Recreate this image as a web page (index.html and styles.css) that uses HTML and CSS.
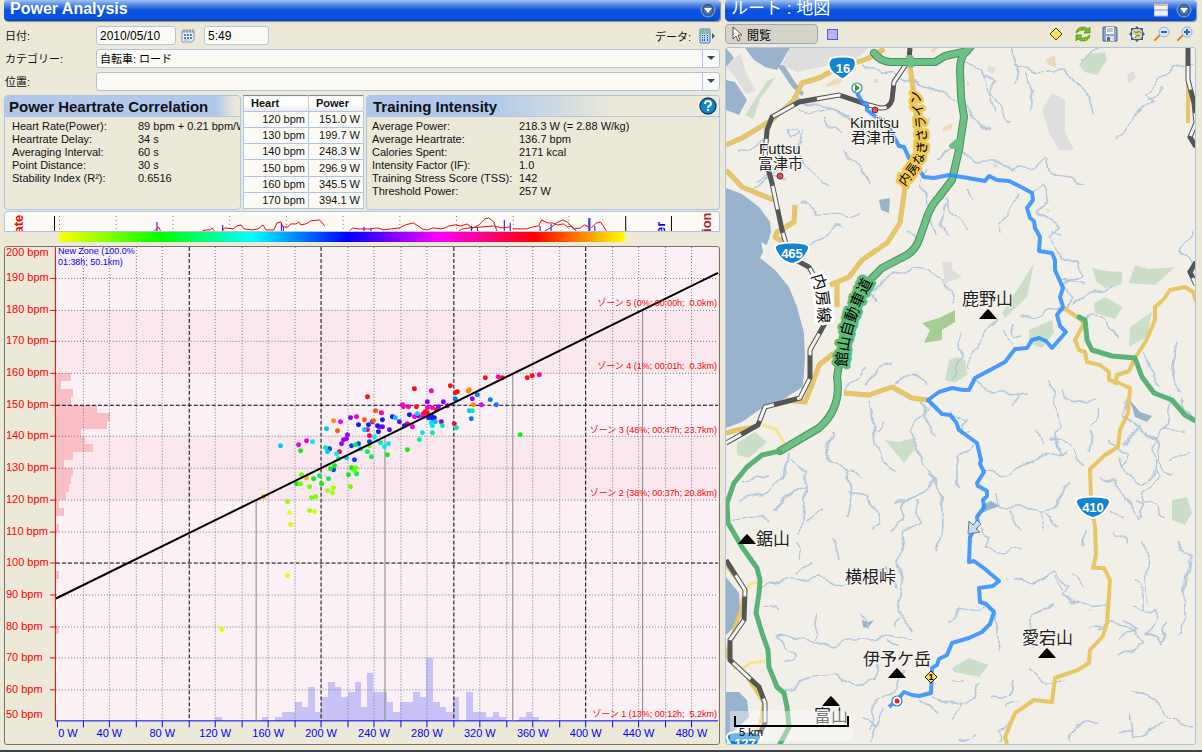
FILE: index.html
```
<!DOCTYPE html>
<html lang="ja">
<head>
    <meta charset="UTF-8">
    <meta name="viewport" content="width=device-width, initial-scale=1.0">
    <title>Power Analysis</title>
    <link rel="stylesheet" href="styles.css">
</head>
<body>
    <main class="workspace">
        <section class="pane">
            <header class="titlebar">
                <h1>Power Analysis</h1>
                <button class="icon-btn" aria-label="Menu">
                    <svg width="16" height="16" viewBox="0 0 16 16"><circle cx="8" cy="8" r="7" fill="#3d6ca5" stroke="#8aa6cc"/><circle cx="8" cy="8" r="5" fill="#4d7ab0" stroke="#2c4f80"/><path d="M4 6h8l-4 5z" fill="#fff"/></svg>
                </button>
            </header>

            <form class="activity-form">
                <div class="form-row">
                    <label for="date">日付:</label>
                    <input type="text" id="date" class="date" value="2010/05/10">
                    <button type="button" class="icon-btn" aria-label="Calendar">
                        <svg width="16" height="16" viewBox="0 0 16 16"><path d="M2 3h12v9l-2 2H2z" fill="#e6ecf6" stroke="#8e98a8"/><path d="M4 1v4M7 1v4M10 1v4M13 1v4" stroke="#77808e"/><path d="M4 6h2v2H4zM7 6h2v2H7zM10 6h2v2h-2zM4 9h2v2H4zM7 9h2v2H7zM10 9h2v2h-2z" fill="#5a83cc"/><path d="M4 12h5" stroke="#9bb4de"/></svg>
                    </button>
                    <input type="text" class="time" value="5:49" aria-label="時刻">
                    <span class="data-label">データ:</span>
                    <button type="button" class="icon-btn" aria-label="データ">
                        <svg width="17" height="16" viewBox="0 0 17 16"><rect x="1" y="1" width="10" height="14" rx="1" fill="#b9d6f5" stroke="#4d7db5"/><path d="M3 3h6v2H3z" fill="#e9ffe0" stroke="#3f9a4a"/><path d="M3 7h1v1H3zM5 7h1v1H5zM8 7h1v1H8zM3 9h1v1H3zM5 9h1v1H5zM8 9h1v1H8zM3 11h1v2H3zM5 11h1v2H5zM8 11h1v2H8z" fill="#245a9c"/><path d="M13 5v6l3-3z" fill="#3d5a80"/></svg>
                    </button>
                </div>
                <div class="form-row">
                    <label for="category">カテゴリー:</label>
                    <div class="select">
                        <select id="category"><option>自転車: ロード</option></select>
                    </div>
                </div>
                <div class="form-row">
                    <label for="location">位置:</label>
                    <div class="select">
                        <select id="location"><option></option></select>
                    </div>
                </div>
            </form>

            <div class="summary">
                <section class="box correlation">
                    <h2>Power Heartrate Correlation</h2>
                    <dl>
                        <dt>Heart Rate(Power):</dt><dd>89 bpm + 0.21 bpm/W</dd>
                        <dt>Heartrate Delay:</dt><dd>34 s</dd>
                        <dt>Averaging Interval:</dt><dd>60 s</dd>
                        <dt>Point Distance:</dt><dd>30 s</dd>
                        <dt>Stability Index (R²):</dt><dd>0.6516</dd>
                    </dl>
                </section>
                <table class="zones">
                    <thead>
                        <tr><th>Heart</th><th>Power</th></tr>
                    </thead>
                    <tbody>
                        <tr><td>120 bpm</td><td>151.0 W</td></tr>
                        <tr><td>130 bpm</td><td>199.7 W</td></tr>
                        <tr><td>140 bpm</td><td>248.3 W</td></tr>
                        <tr><td>150 bpm</td><td>296.9 W</td></tr>
                        <tr><td>160 bpm</td><td>345.5 W</td></tr>
                        <tr><td>170 bpm</td><td>394.1 W</td></tr>
                    </tbody>
                </table>
                <section class="box intensity">
                    <h2>Training Intensity
                        <button class="icon-btn" aria-label="Help">
                            <svg width="19" height="19" viewBox="0 0 19 19"><circle cx="9" cy="9" r="8" fill="#0f86d2" stroke="#123a5c" stroke-width="1.3"/><path d="M6 7q0-3 3-3t3 3q0 1-2 2-1 1-1 2" fill="none" stroke="#fff" stroke-width="2"/><path d="M8 12h2v2H8z" fill="#fff"/></svg>
                        </button>
                    </h2>
                    <dl>
                        <dt>Average Power:</dt><dd>218.3 W (= 2.88 W/kg)</dd>
                        <dt>Average Heartrate:</dt><dd>136.7 bpm</dd>
                        <dt>Calories Spent:</dt><dd>2171 kcal</dd>
                        <dt>Intensity Factor (IF):</dt><dd>1.0</dd>
                        <dt>Training Stress Score (TSS):</dt><dd>142</dd>
                        <dt>Threshold Power:</dt><dd>257 W</dd>
                    </dl>
                </section>
            </div>

            <svg class="strip" viewBox="4 212 717 19">
                <g class="strip-text">
                    <text transform="translate(22 243) rotate(-90)" fill="#f00">Rate</text>
                    <text transform="translate(667 234) rotate(-90)" fill="#00f">er</text>
                    <text transform="translate(713 232) rotate(-90)" fill="#a52a2a">ion</text>
                </g>
                <path d="M58.5 216v15M115.5 216v15M172.5 216v15M229.5 216v15M286.5 216v15M343.5 216v15M400.5 216v15M457.5 216v15M514.5 216v15M570.5 216v15" stroke="#777" stroke-dasharray="1 3"/>
                <path d="M53.5 216v15M627.5 216v15M673.5 216v15" stroke="#000"/>
                <path d="M156.5 222v9M222.5 225v6M281.5 223v8M283.5 227v4M364.5 227v4M371.5 228v3M472.5 226v5M478.5 227v4M505.5 220v11M511.5 223v8M541.5 226v5M552.5 224v7M590.5 218v13M591.5 218v13M596.5 226v5" stroke="#00f"/>
                <path d="M154 231l4-4 2 4M202 231l4-1 4 0 2-2 2 3M222 231l2-3 9 1 4-3 4-1 3 4 8 1 6-1 5-4 3 5h8l3-7 4-1 2 5h5l3-3h5l3-2 2 3 5-1 5-3 9-1 5 6M350 231l3-3 6 1h11l8-1 6 2 8-1 8-1 6-3 8-2 5 3 4 3 5 1 6-2 8 1 4-1 4-2 6-1 6 1 6-2 4 3M460 231l3-2 8-1 12-1 12-1 8 2 8-1M514 229h14l6-2 6-1 3-6 6 3 5 0 5 2 6-1 4 3 4-1 3 3 6-1 4-3 5 2M593 228l5-5 4-1 3 4 3 5" fill="none" stroke="#f00"/>
                <path d="M472 229l8-4 6-6 4-1 5 4 3 9M546 231l6-3 6-5 6-3 5 2 5 6 4 3" fill="none" stroke="#a52a2a"/>
            </svg>
            <div class="rainbow"></div>

            <svg class="chart" id="chart" viewBox="5 247 715 498"></svg>
        </section>

        <section class="pane">
            <header class="titlebar">
                <h1 class="map-title">ルート : 地図</h1>
                <button class="icon-btn" aria-label="Split">
                    <svg width="14" height="14" viewBox="0 0 14 14"><path d="M0 1h14v12H0z" fill="#f3f3ff" stroke="#b5a9de"/><path d="M1 2h12" stroke="#d8c27c" stroke-width="2"/><path d="M0 7h14" stroke="#7a8de0"/></svg>
                </button>
                <button class="icon-btn" aria-label="Menu">
                    <svg width="16" height="16" viewBox="0 0 16 16"><circle cx="8" cy="8" r="7" fill="#3d6ca5" stroke="#8aa6cc"/><circle cx="8" cy="8" r="5" fill="#4d7ab0" stroke="#2c4f80"/><path d="M4 6h8l-4 5z" fill="#fff"/></svg>
                </button>
            </header>
            <div class="toolbar">
                <button class="mode-btn">
                    <svg width="12" height="16" viewBox="0 0 12 16"><path d="M2 1v12l3-3 2 5 2-1-2-5h4z" fill="#fff" stroke="#555"/></svg>
                    閲覧
                </button>
                <button class="icon-btn select-area" aria-label="範囲選択"></button>
                <div class="tools">
                    <button class="icon-btn" aria-label="Waypoint">
                        <svg width="16" height="16" viewBox="0 0 16 16"><path d="M8 2l6 6-6 6-6-6z" fill="#ffe066" stroke="#55430d"/></svg>
                    </button>
                    <button class="icon-btn" aria-label="Refresh">
                        <svg width="16" height="16" viewBox="0 0 16 16"><path d="M1 7Q2 1 8 1q3 0 5 2l2-2v6H9l2-2Q7 2 1 7z" fill="#7fbf24" stroke="#45861a" stroke-width=".7"/><path d="M15 9q-1 6-7 6-3 0-5-2l-2 2V9h6l-2 2q4 3 10-2z" fill="#7fbf24" stroke="#45861a" stroke-width=".7"/></svg>
                    </button>
                    <button class="icon-btn" aria-label="Save">
                        <svg width="16" height="16" viewBox="0 0 16 16"><path d="M1 1h13l1 1v13H1z" fill="#8da6c8" stroke="#4a658f"/><path d="M4 1h8v7H4z" fill="#f5f8ff"/><path d="M5 3h6M5 5h6" stroke="#8494ad"/><path d="M4 10h8v5H4z" fill="#dbe2ee"/><path d="M5 11h3v4H5z" fill="#54698c"/></svg>
                    </button>
                    <button class="icon-btn" aria-label="Fit route">
                        <svg width="16" height="16" viewBox="0 0 16 16"><path d="M8 0l3 3H5zM8 16l3-3H5zM0 8l3-3v6zM16 8l-3-3v6zM2 2h4L2 6zM14 2v4l-4-4zM2 14v-4l4 4zM14 14h-4l4-4z" fill="#4b55a5"/><circle cx="8" cy="8" r="5" fill="#b5e08a"/><path d="M5 5q2 3 4 1t3 1M6 12l2-3 3 1" stroke="#e1502e" fill="none"/><path d="M4 9l2 1" stroke="#fff" stroke-width="2"/></svg>
                    </button>
                    <button class="icon-btn zoom" aria-label="Zoom out">
                        <svg width="16" height="16" viewBox="0 0 16 16"><path d="M1 14l5-5" stroke="#df8433" stroke-width="2" stroke-linecap="round"/><circle cx="10" cy="6" r="5" fill="#d5e9ff" stroke="#8db0dc"/><path d="M7 6h6" stroke="#2d65b5" stroke-width="2"/></svg>
                    </button>
                    <button class="icon-btn zoom" aria-label="Zoom in">
                        <svg width="16" height="16" viewBox="0 0 16 16"><path d="M1 14l5-5" stroke="#df8433" stroke-width="2" stroke-linecap="round"/><circle cx="10" cy="6" r="5" fill="#d5e9ff" stroke="#8db0dc"/><path d="M7 6h6M10 3v6" stroke="#2d65b5" stroke-width="2"/></svg>
                    </button>
                </div>
            </div>

            <svg class="map" viewBox="726 48 469 696">
                <defs>
                    <filter id="wiggle" x="0" y="0" width="1" height="1">
                        <feTurbulence type="fractalNoise" baseFrequency="0.07" numOctaves="1" seed="4"/>
                        <feDisplacementMap in="SourceGraphic" scale="14" xChannelSelector="R" yChannelSelector="G"/>
                    </filter>
                    <path id="shield" d="M-14-9Q0-12 14-9 19-7 16-2 11 8 3 10 0 12-3 10-11 8-16-2-19-7-14-9Z"/>
                    <path id="peak" d="M-9 5l6-7 3-3 3 3 6 7z"/>
                    <path id="nagisa-line" d="M905 187L919 168Q927 155 927 140L925 120 919 92"/>
                    <path id="tateyama-line" d="M847 367Q848 325 875 278"/>
                    <path id="uchibo-line" d="M811 276Q820 298 818 332"/>
                </defs>

                <!-- sea and lakes -->
                <g class="sea">
                    <path d="M745 48h45l-13 22-12-3-11-7zM726 80l9 2 12 18-8 15-13-5zM726 48l8 10-8 9z"/>
                    <path d="M777 65l15 22 10 9 2-3-9-11-11-17z"/>
                    <path d="M726 188L742 194 759 207 770 222 771 232 767 245 761 242 763 252 760 258 775 270 789 287 797 307 804 333 805 357 803 387 782 400 759 410 742 422 726 428z"/>
                    <path d="M726 577L739 593 740 610 734 627 726 635zM726 692L739 692 747 700 749 717 735 730 726 744z"/>
                    <path d="M879 200l11-2-1 15-8-3zM982 505l9-4 9 5-9 3-9 4zM1130 400l10 12 12 4-5 6-12-5zM862 620l6 2 6-2-6 8-5-1z"/>
                </g>

                <!-- built-up areas and forest -->
                <path class="urban" d="M790 48h79l-14 12-25 5-33 7-15-7zM1042 110l10-17 13 7v33l9 17h-15l-10-17zM942 262h10v8l10 7-17 6zM988 65l8 3-3 6-6-3zM1127 75l6-4 3 6-7 7zM726 67l14-14 6 20 10 18-10 3-10-16z"/>
                <path class="forest" d="M1079 65l8-11 18-2 2 8-10 15-12-3zM1092 268l15 3 15 1v12l-17 4-9-7zM1135 265l13 4 27-2-20 18-26-2zM1094 303l11-6 18 10-8 12-20-6zM1130 327l22-15-5 25-18 10zM1034 263l-7 34-22 21-3-5 17-26zM1029 330l23-10 2 13-12 15-13-5zM949 360l8-3 8 3 2 15-12 8-10-3zM737 443l18-11 12 10-18 16-12-3zM885 440l14 2 15-4v12l-10 13-9-11zM1172 500l15-3 5 16-7 12-13-5zM952 668l17-10 20 7-10 12-25-5zM745 115l22-34 9-4-16 22-7 20zM925 120l5-3-1 8z"/>
                <path class="park" d="M922 323l17-5 16-8v12l-13 8v10l-18 3 6-13z"/>
                <path class="field" d="M825 85l10-6 10-1-5 5-12 4zM930 50l8-3-4 6zM1045 60l10-5 1 13-7-3zM943 127l10-4-2 7-8 1zM992 163l6 2-2 4zM874 79l4 0v4h-4zM966 83l3-1v4zM1046 208l4 2-2 3zM1005 578l4 2-2 1zM1088 609l5 1-4 1z"/>

                <!-- rivers -->
                <g class="rivers" filter="url(#wiggle)">
                    <path d="M798 108l14 4 14-4 20 7 22 18 14 4M805 130l-8 20 12 20 20 16M840 150l18 16 12 18M824 115l6 15 14 2M795 98l30 8 22 12M737 150l25-7 22 16-8 14-20 8M750 192l20-14 16 4M786 132l10-4 4 6-8 6z"/>
                    <path d="M866 65l24 10 38 12 34 18 26 26M960 60l22 8 6 22 24 32M985 78l10 5-6 10 4 20M1010 50l8 14-4 20M1014 62l22 10 30-2 24 26 4 20M1024 72l8 18-2 20M1080 63l22-15M1190 62l-22 10-24 20 12 10-20 12-18 24M1150 100l14-14"/>
                    <path d="M936 160l16-10 24 10 22 0 14 10 22-2 14-10 4 14 20 10 14 2M926 170l-4 14 8 30 8 20M944 198l12 20 10 14M1020 195l-22 28 2 12M946 205l-4 20 4 10M966 190l8 10M860 215l-44-1-16-12M795 250l28-12 20-12M920 240l-14-10"/>
                    <path d="M1034 192l10-8 4 14-10 12 8 10 14 8-12 10 6 14 22 10 4 14-16 10 10 12-14 10M1064 234l-14-2M1064 280l20 4M1080 316l20 2 20 20M1020 316l22-1 20-10M1070 305l20-12 28-8M1190 230l-8 20 12 14M1144 350l14 36M1176 340l-4 30 8 20"/>
                    <path d="M872 290l40-24 18 4 20 20 4 14M868 288l6 14M958 330l2 28-6 22M985 330l-14 20-2 20M996 320l-10 10M1010 325l6 10 10-2M1012 345l-8-14M865 385l14-18 12-4M845 390l22-22M895 385l18-10 14 10"/>
                    <path d="M830 432l-4 24 22 14 4 26-4 22M850 470l14 8M848 490l20 8 12 26-8 6M788 454l-4 24-22 18-22 4M790 458l14 14 0 30-4 34M804 485l-18 12-12 14M805 520l20-10M740 480l28-6M732 520l20-4 14 4M800 560l-4-20M838 562l-4-24"/>
                    <path d="M869 400l4 24 2 20 6 16 14 10M876 430l10-10M930 405l-10 14-12 10 10 20 10 20 6 14-16 10-14 10-2 18-14 10M928 475l14 20 2 30-10 24M904 530l14-6-2-24M904 530l-6 30 4 20-4 30 14 20M894 500l16 0"/>
                    <path d="M920 395l8 30 10 10M950 415l18 4-6 14 8 0M975 445l-18 12 0 30M984 470l18 6 20-10 20-10 24-2M993 494l6 14 22 0 20 4 14-8 14-22M1010 510l8 20M1040 512l4 20M1045 512l14 16M980 530l12 6-8 14 20 2 18-4M972 380l20 14 18 0 20-2M1020 393l-8 14M1050 380l4 26 10 20-10 8 6 20M1035 430l10 14M1060 390l14 14 20-4"/>
                    <path d="M1050 436l18 8 16 22M1090 425l10-14M1093 430l-4 24M1130 395l-8 20 22 16 18 14-4 18 14 12M1120 455l6 20 16 10 14-14M1112 480l16 20 10 20M1098 475l14 6M1170 395l-4 30-12 20 4 30-14 20-4 22M1182 398l10 26M1163 430l20 0M1170 460l20-8M1085 530l-2 16M1140 540l10 14-4 26 4 22M1175 540l14 16-4 30 0 34-10 14M1115 530l14 14M1105 440l24 14-8 12M1140 425l-14 20M1134 500l20 6 10 12M1108 510l18 8"/>
                    <path d="M760 590l14-10 22 0 24-4 22 10 22-4 22-16 10 22M810 560l-14 14M818 612l-4 28M777 638l18 16-10 8M777 638l18-2 28 10 22-6 22 0 24-6 22 4M867 628l-6-16M894 626l10-6M888 640l10 6M764 608l16 4M785 690l22-10 28-4 20 10 20-6M875 680l0-18"/>
                    <path d="M1015 580l18 4 22-12 14 14-6 10 20 10 24-2M1070 575l14 14M1030 635l4-20 18-14M1063 590l-6-14M1098 630l14-6 22 4 10 14-24 14M1144 610l0-20-8-10M1134 608l24 4-10 22 14 8M1160 640l10-18M1122 620l14 6-14 14M1090 630l12-4"/>
                    <path d="M948 620l14-10 20-4M996 612l4 38M1030 668l14 14 20-4M1014 680l-4 14-16 6M1004 704l14-2M930 696l18 8 24-4 6-18M960 700l-6 16M950 680l14 0M870 730l4-30 20-10 10-20M862 720l14 6 6-18M878 722l-8 20M920 700l18 14M1010 720l-14 14 4 8M960 742l16-8M1070 742l6-18 22-2M1132 690l24 10 10 20 26 6M1130 712l4 24 28-12M1132 730l-14 6"/>
                </g>

                <!-- trunk roads -->
                <g class="road">
                    <path class="casing" d="M884 49L869 58 855 63 830 72 819 78 802 83 794 100 772 120 742 138 726 145M910 67L914 95 918 130 924 145 916 163 905 187 900 223 887 243 862 260 849 277 830 285M837 283v24M834 353L819 365 812 385 805 402 785 400M755 427L737 430 726 433M726 170L742 187 774 200M795 205l-1 17-17 10-2 5 10 6M844 393L869 395 892 387 912 398 928 400"/>
                    <path d="M884 49L869 58 855 63 830 72 819 78 802 83 794 100 772 120 742 138 726 145M910 67L914 95 918 130 924 145 916 163 905 187 900 223 887 243 862 260 849 277 830 285M837 283v24M834 353L819 365 812 385 805 402 785 400M755 427L737 430 726 433M726 170L742 187 774 200M795 205l-1 17-17 10-2 5 10 6M844 393L869 395 892 387 912 398 928 400"/>
                    <path d="M1064 308L1077 317 1084 323 1075 340 1079 350 1085 352 1087 362 1100 365 1109 372 1109 380 1119 383 1130 388 1128 413 1120 430 1118 447 1105 455 1090 469 1091 500 1095 527 1096 555 1093 568 1104 568 1110 580 1107 623 1103 636 1090 650 1089 663 1078 670 1055 678 1052 702 1034 700 1015 713 1005 737 1007 744M1115 385l2-10 12-4 6-13 11-17 9-21v-13l9-8 6-9 15-3 8 5 3 10M1188 83v40M727 566l18 24-4 20-15 45 20 20 18 28-4 24"/>
                </g>
                <path class="minor" d="M762 425l14 4 8 14M757 582l-7 2-8 14M765 661l-14 2-9 6-9-1M751 735l14-14"/>

                <!-- railways -->
                <path class="rail-edge" d="M910 48L909 60 894 82 892 100Q889 109 880 108L869 105 839 95 799 102 772 117 767 130 765 157 772 183 782 230 790 257 809 267 822 290M828 318L810 350V378L800 398 765 407 758 425 726 443M726 560L745 590 744 620 730 640 730 660 759 687 765 703 765 723 759 735M1188 48V80L1194 103 1196 123 1190 137 1196 147M1196 262l-6 10 6 13"/>
                <path class="rail" d="M910 48L909 60 894 82 892 100Q889 109 880 108L869 105 839 95 799 102 772 117 767 130 765 157 772 183 782 230 790 257 809 267 822 290M828 318L810 350V378L800 398 765 407 758 425 726 443M726 560L745 590 744 620 730 640 730 660 759 687 765 703 765 723 759 735M1188 48V80L1194 103 1196 123 1190 137 1196 147M1196 262l-6 10 6 13"/>

                <!-- expressways -->
                <g class="expressway">
                    <path class="edge" d="M874 53Q880 61 890 62H935L945 56 967 51M973 44L965 53Q960 58 960 70L961 97 964 117 959 150 952 180 939 197Q932 204 927 217L919 240Q915 250 907 255L882 268 865 285 849 317 842 347 837 377Q842 408 819 428L780 451"/>
                    <path d="M874 53Q880 61 890 62H935L945 56 967 51M973 44L965 53Q960 58 960 70L961 97 964 117 959 150 952 180 939 197Q932 204 927 217L919 240Q915 250 907 255L882 268 865 285 849 317 842 347 837 377Q842 408 819 428L780 451"/>
                    <path class="thin" d="M780 451L762 455 747 467 734 483 727 503 728 523 742 547 757 568 760 580 759 593 756 613 762 633 768 650 769 667 777 687 784 693 787 707 789 727 780 744M1079 317L1085 320 1087 340 1092 350 1112 356 1135 358 1142 377 1154 393 1172 400 1185 415 1196 421"/>
                    <path d="M909 58l2 0v7zM957 142l-5 4 7 0z"/>
                </g>

                <!-- recorded track -->
                <path class="route" d="M857 93L862 102 867 104V110L876 117 885 121 894 137 899 146 904 147 909 158 917 158 918 168 924 177 934 178 949 175 962 177 985 181 989 176 997 180 1009 181 1023 188 1032 193 1033 200 1027 208 1030 218 1034 221 1035 228 1040 237 1039 251 1052 253 1055 260 1055 270 1063 288 1060 297 1063 307 1057 315 1060 326 1066 332 1052 348 1046 341 1039 338 1032 340 1027 348 1015 349 1005 362 975 378 969 390 963 390 952 388 939 392 928 400 942 414 950 415 956 422 959 430 977 443 981 460 980 464 984 472 977 483 978 486 987 491 987 496 983 500 984 507 977 517 978 524 970 537 969 562 974 561 985 569 999 581 993 586 979 588 980 602 986 604 994 612 990 624 982 632 969 638 952 643 947 655 939 659 937 665 932 668 931 693 919 696 912 695 904 692 897 700 889 707"/>

                <!-- labels along lines -->
                <g class="path-label">
                    <text class="on-trunk"><textPath href="#nagisa-line">内房なぎさライン</textPath></text>
                    <text class="on-expressway"><textPath href="#tateyama-line">館山自動車道</textPath></text>
                    <text class="on-rail"><textPath href="#uchibo-line">内房線</textPath></text>
                </g>

                <g class="places">
                    <circle cx="875" cy="110" r="3"/>
                    <circle cx="780" cy="176" r="3"/>
                    <text x="850" y="128">Kimitsu</text>
                    <text x="851" y="143">君津市</text>
                    <text x="759" y="154">Futtsu</text>
                    <text x="758" y="169">富津市</text>
                </g>
                <g class="peaks">
                    <use href="#peak" x="988" y="314"/><text x="962" y="305">鹿野山</text>
                    <use href="#peak" x="747" y="539"/><text x="756" y="545">鋸山</text>
                    <text x="845" y="583">横根峠</text>
                    <use href="#peak" x="897" y="673"/><text x="863" y="665">伊予ケ岳</text>
                    <use href="#peak" x="1047" y="653"/><text x="1022" y="644">愛宕山</text>
                    <use href="#peak" x="831" y="701"/><text x="814" y="722">富山</text>
                </g>

                <g class="shields">
                    <path d="M831 58Q843 55 854 58 859 65 851 73L845 78Q843 80 840 78L833 73Q825 65 831 58Z"/>
                    <text x="843" y="73">16</text>
                    <use href="#shield" x="792" y="253"/><text x="792" y="258">465</text>
                    <use href="#shield" x="1093" y="507"/><text x="1093" y="512">410</text>
                    <use href="#shield" x="744" y="742"/><text x="745" y="748">127</text>
                </g>

                <!-- markers -->
                <circle cx="857" cy="88" r="5" fill="#fff" stroke="#2a86c8" stroke-width="1.2"/>
                <path d="M855 84v8l5-4z" fill="#4a9a12"/>
                <circle cx="897" cy="701" r="5" fill="#fff" stroke="#2a86c8" stroke-width="1.2"/>
                <circle cx="897" cy="701" r="2.5" fill="#e22"/>
                <path d="M931 671l6 6-6 6-6-6z" fill="#ffd94a" stroke="#222"/>
                <text class="wp" x="931" y="680">1</text>
                <path d="M969 521L968 534 980 532 976 529 981 524 977 520 973 525z" fill="#b9dcff" stroke="#777"/>

                <rect x="730" y="711" width="123" height="30" fill="#fff" opacity=".4"/>
                <path d="M735 716v10h113v-10" fill="none" stroke="#000" stroke-width="2"/>
                <text class="scale" x="739" y="736">5 km</text>
            </svg>
        </section>
    </main>
    <script src="chart.js"></script>
</body>
</html>
```
FILE: styles.css
```
:root {
    --bg: #ece9d8;
    --field: #fcfaf5;
    --line: #aec4e2;
    --ui-font: "Liberation Sans", "Noto Sans CJK JP", sans-serif;
}

* {
    margin: 0;
    padding: 0;
    box-sizing: border-box;
}

body {
    background: var(--bg);
    color: #111;
    font-family: var(--ui-font);
    font-size: 11px;
}

.workspace {
    display: grid;
    grid-template-columns: 716fr 471fr;
    gap: 5px;
    min-height: 100vh;
    padding: 0 6px 5px 4px;
    border-bottom: 2px solid #39424e;
}

.pane {
    display: flex;
    flex-direction: column;
    min-width: 0;
}

svg {
    display: block;
}

.icon-btn {
    display: inline-flex;
    align-items: center;
    justify-content: center;
    background: none;
    border: none;
    cursor: pointer;
}

/* title bars */
.titlebar {
    display: flex;
    align-items: center;
    gap: 8px;
    height: 21px;
    padding: 0 4px 1px 6px;
    background: linear-gradient(#a3c2f4, #4d86e6 25%, #0b50dd 50%, #0753e6 85%, #0a3fae);
    border-radius: 3px 3px 4px 4px;
    box-shadow: 1px 1px 1px #8a8a80;
    color: #fff;
    overflow: hidden;
}

.titlebar h1 {
    flex: 1;
    padding-bottom: 2px;
    font-size: 16px;
    line-height: 18px;
}

.titlebar .map-title {
    font-size: 17px;
    font-weight: normal;
}

/* activity form */
.activity-form {
    display: flex;
    flex-direction: column;
    gap: 4px;
    padding: 5px 0 4px;
}

.form-row {
    display: flex;
    align-items: center;
    height: 19px;
}

.form-row label {
    width: 92px;
    padding: 0 0 2px 1px;
    font-size: 11px;
}

.form-row input,
.select {
    height: 19px;
    background: var(--field);
    border: 1px solid var(--line);
    border-radius: 3px;
}

.form-row input {
    padding: 0 3px;
    font: 12px var(--ui-font);
}

.date {
    width: 80px;
    margin-right: 4px;
}

.time {
    width: 65px;
    margin-left: 8px;
}

.data-label {
    margin: 0 8px 0 auto;
}

.data-label + .icon-btn {
    margin-right: 4px;
}

.select {
    flex: 1;
    position: relative;
}

.select select {
    width: 100%;
    height: 17px;
    padding: 0 3px;
    appearance: none;
    background: none;
    border: none;
    font: 11px var(--ui-font);
}

.select::before {
    content: "";
    position: absolute;
    right: 16px;
    top: 0;
    bottom: 0;
    border-left: 1px solid var(--line);
}

.select::after {
    content: "";
    position: absolute;
    right: 4px;
    top: 6px;
    border: 4px solid transparent;
    border-top-color: #2f4a78;
    border-bottom: none;
}

/* summary boxes */
.summary {
    display: grid;
    grid-template-columns: 237fr 121px 354fr;
    gap: 0 2px;
    height: 115px;
    margin-bottom: 1px;
}

.box {
    min-width: 0;
    border: 1px solid var(--line);
    border-radius: 4px;
    overflow: hidden;
}

.box h2 {
    display: flex;
    align-items: center;
    justify-content: space-between;
    height: 21px;
    padding: 0 1px 0 4px;
    border-bottom: 1px solid var(--line);
    font-size: 15px;
    background: linear-gradient(90deg, #b0c8ec 90%, var(--bg) 98%);
}

.intensity h2 {
    padding-left: 6px;
    background: linear-gradient(90deg, #b0c8ec 35%, var(--bg) 70%);
}

.box dl {
    display: grid;
    grid-template-columns: 126px 1fr;
    padding: 3px 0 0 7px;
    line-height: 13px;
    white-space: nowrap;
}

.intensity dl {
    grid-template-columns: 147px 1fr;
    padding-left: 5px;
}

.zones {
    height: 114px;
    border: 1px solid var(--line);
    border-collapse: collapse;
    border-top-color: #888;
    background: var(--field);
    line-height: 13px;
}

.zones th {
    height: 16px;
    padding-left: 7px;
    background: linear-gradient(#fff 50%, #e9e9ee);
    border-right: 1px solid #ccc;
    text-align: left;
}

.zones td {
    height: 16px;
    padding-right: 3px;
    border: 1px solid var(--line);
    text-align: right;
}

.zones th:first-child {
    width: 65px;
}

/* strip above the chart */
.strip {
    width: 100%;
    background: var(--field);
    border: 1px solid var(--line);
    border-radius: 3px 3px 0 0;
}

.strip-text {
    font-size: 13px;
    font-weight: bold;
}

.rainbow {
    height: 10px;
    margin: 0 95px 4px 55px;
    background: linear-gradient(90deg, #ff0, #0f0 18%, #0ff 34%, #00f 51%, #f0f 67%, #f00 84%, #ff0);
}

/* chart */
.chart {
    width: 100%;
    border: 1px solid #77756c;
    border-radius: 3px;
}

.chart text {
    font-size: 11px;
    white-space: pre;
}

.chart .bpm {
    fill: #f00;
}

.chart .watt {
    fill: #00f;
    text-anchor: middle;
}

.chart .zone {
    fill: #f00;
    font-size: 9px;
    text-anchor: end;
}

.chart .zone-total {
    fill: #00f;
    font-size: 9px;
}

.chart .dotted {
    stroke: #777;
    stroke-dasharray: 1 2;
}

.chart .dashed {
    stroke: #000;
    stroke-dasharray: 4 2;
}

/* map toolbar */
.toolbar {
    display: flex;
    align-items: center;
    height: 26px;
}

.mode-btn {
    display: flex;
    align-items: center;
    gap: 4px;
    width: 93px;
    height: 20px;
    padding-left: 5px;
    background: #d6d3c9;
    border: 1px solid #a3a6b4;
    border-radius: 4px;
    font: 12px var(--ui-font);
}

.select-area {
    width: 11px;
    height: 11px;
    margin-left: 9px;
    background: #b9b5e8;
    border: 1px solid #5b55ef;
}

.tools {
    display: flex;
    margin-left: auto;
}

.tools .icon-btn {
    width: 27px;
}

.tools .zoom {
    width: 23px;
}

/* map */
.map {
    width: 100%;
    background: #f2efe9;
    border: 1px solid var(--line);
    border-radius: 3px;
}

.sea {
    fill: #99b3cc;
}

.urban {
    fill: #dedede;
}

.forest {
    fill: #cbdec8;
}

.park {
    fill: #a8cd95;
}

.field {
    fill: #eed8b8;
}

.rivers {
    fill: none;
    stroke: #b3c8dc;
    stroke-width: 1.6;
    stroke-linejoin: round;
}

.road {
    fill: none;
    stroke: #e8c665;
    stroke-width: 4;
    stroke-linejoin: round;
}

.road .casing {
    stroke: #d3bd84;
    stroke-width: 5;
}

.minor {
    fill: none;
    stroke: #f6e48f;
    stroke-width: 3;
}

.rail-edge {
    fill: none;
    stroke: #555;
    stroke-width: 5;
}

.rail {
    fill: none;
    stroke: #f4f4f4;
    stroke-width: 3;
    stroke-dasharray: 24 24;
    stroke-dashoffset: 30;
}

.expressway {
    fill: none;
    stroke: #6dc184;
    stroke-width: 6;
    stroke-linecap: round;
    stroke-linejoin: round;
}

.expressway .edge {
    stroke: #4c8f60;
    stroke-width: 8;
}

.expressway .thin {
    stroke: #5bb276;
    stroke-width: 5;
}

.route {
    fill: none;
    stroke: #2a8cff;
    stroke-width: 4;
    stroke-linejoin: round;
    opacity: .85;
}

.path-label text {
    paint-order: stroke;
    stroke-linejoin: round;
    stroke-width: 6px;
    font-size: 13px;
}

.path-label .on-trunk {
    stroke: #f0c850;
}

.path-label .on-expressway {
    stroke: #5dbb78;
    font-size: 15px;
}

.path-label .on-rail {
    stroke: #fff;
    font-size: 16px;
}

.places {
    font-size: 15px;
}

.places circle {
    fill: #e05050;
    stroke: #703030;
}

.places text,
.peaks text {
    fill: #222;
    stroke: #f8f6f2;
    stroke-width: 2px;
    paint-order: stroke;
}

.peaks {
    font-size: 17px;
}

.shields path,
.shields use {
    fill: #1483d2;
    stroke: #fff;
    stroke-width: 2;
}

.shields text {
    fill: #fff;
    font-size: 13px;
    font-weight: bold;
    text-anchor: middle;
}

.wp {
    font-size: 9px;
    font-weight: bold;
    text-anchor: middle;
}

.scale {
    font-size: 11px;
}
```
FILE: chart.js
```
const chart = document.getElementById('chart');

const LEFT = 56;
const RIGHT = 719;
const TOP = 247;
const BOTTOM = 722;

const wattX = w => Math.round(56.5 + w * 1.3245);
const bpmY = b => Math.round(563.3 - (b - 100) * 3.17);

function add(name, attrs, text) {
    const el = document.createElementNS('http://www.w3.org/2000/svg', name);
    for (const key in attrs) {
        el.setAttribute(key, attrs[key]);
    }
    if (text) {
        el.textContent = text;
    }
    chart.appendChild(el);
}

function rect(x, y, width, height, fill) {
    add('rect', { x, y, width, height, fill, 'shape-rendering': 'crispEdges' });
}

// plot background with heartrate zones
rect(LEFT, TOP, RIGHT - LEFT, BOTTOM - TOP, '#faf0f6');
rect(LEFT, bpmY(180), RIGHT - LEFT, bpmY(160) - bpmY(180), '#fae8ee');
rect(LEFT, bpmY(140), RIGHT - LEFT, bpmY(120) - bpmY(140), '#fae8ee');

// heartrate histogram, 2.5 bpm per bar, downwards from 160
const heartBars = [15, 5, 17, 15, 41, 54, 51, 25, 29, 37, 17, 8, 17, 15, 13, 10, 3, 8, 0, 3,
    0, 0, 0, 0, 0, 3, 0, 0, 0, 0, 0, 0, 3];
heartBars.forEach((w, i) => {
    const y = bpmY(160 - i * 2.5);
    rect(LEFT, y, w, bpmY(157.5 - i * 2.5) - y, '#fabfc5');
});

// power histogram, 5 W per bar
const powerBars = {
    120: 4, 155: 4, 165: 4, 170: 9, 175: 9, 180: 19, 185: 14, 190: 34, 195: 9, 200: 24,
    205: 39, 210: 34, 215: 24, 220: 29, 225: 39, 230: 14, 235: 48, 240: 29, 245: 29, 250: 19,
    255: 9, 260: 19, 265: 19, 270: 29, 275: 24, 280: 63, 285: 19, 290: 14, 295: 9, 300: 24,
    310: 29, 315: 9, 320: 9, 325: 4, 330: 9, 335: 4, 350: 4, 355: 9, 360: 4
};
for (const w in powerBars) {
    const x = wattX(+w);
    rect(x, BOTTOM - powerBars[w], wattX(+w + 5) - x, powerBars[w], '#c9c2f6');
}

// grid and axis labels
for (let w = 0; w <= 500; w += 20) {
    const x = wattX(w) + 0.5;
    if (w > 0 && w < 500) {
        add('path', { d: `M${x} ${TOP}V${BOTTOM}`, class: w % 100 ? 'dotted' : 'dashed' });
    }
    if (w < 500) {
        add('path', { d: `M${x} ${BOTTOM}v6`, stroke: '#00f' });
    }
    if (w % 40 === 0) {
        add('text', { x: w ? x : 68, y: 738, class: 'watt' }, `${w} W`);
    }
}
for (let b = 50; b <= 200; b += 10) {
    const y = bpmY(b) + 0.5;
    if (b > 50 && b < 200) {
        add('path', { d: `M${LEFT} ${y}H${RIGHT}`, class: b % 50 ? 'dotted' : 'dashed' });
        add('path', { d: `M50 ${y}h6`, stroke: '#f00' });
    }
    const labelY = Math.min(Math.max(y + 3, 256), 719);
    add('text', { x: 6, y: labelY, class: 'bpm' }, `${b} bpm`);
}
add('path', { d: `M55.5 ${TOP}V${BOTTOM}`, stroke: '#f00' });
add('path', { d: `M${LEFT} ${BOTTOM - 0.5}H${RIGHT}`, stroke: '#00f' });

// zone borders, dropped from the regression line
[[151, 120], [248, 140], [345, 160], [443, 180]].forEach(([w, b]) => {
    add('path', { d: `M${wattX(w) + 0.5} ${bpmY(b)}V${BOTTOM}`, stroke: '#888' });
});

// samples, coloured by time
const samples = {
    '#ff1010': [[368, 397], [415, 389], [451, 386], [458, 392], [456, 393], [417, 407], [437, 410], [428, 413],
        [424, 414], [426, 412], [486, 378], [503, 378], [528, 378], [533, 376]],
    '#f0055a': [[408, 424], [368, 430], [380, 427], [370, 436], [340, 452], [455, 424]],
    '#ff00b4': [[432, 391], [403, 405], [404, 407], [409, 407], [382, 413], [357, 417], [428, 408], [433, 408],
        [499, 377], [540, 375]],
    '#f000f0': [[482, 405], [415, 417], [424, 417], [413, 427], [299, 445], [307, 441], [341, 422]],
    '#9000ff': [[473, 399], [444, 402], [428, 402], [448, 406], [439, 407], [351, 418], [419, 416], [442, 422],
        [348, 435], [347, 439], [344, 440], [342, 444]],
    '#5a10f5': [[383, 427], [390, 430], [373, 422], [400, 422]],
    '#1818ff': [[383, 420], [393, 417], [410, 415], [405, 426], [429, 418], [433, 419], [435, 418], [432, 416],
        [359, 425], [369, 425], [378, 426], [379, 432]],
    '#0040ff': [[370, 442], [330, 449], [352, 446], [359, 444], [355, 460], [334, 470]],
    '#007cff': [[478, 395], [456, 399], [491, 400], [497, 405], [472, 419]],
    '#00c8ff': [[470, 411], [396, 418], [418, 414], [436, 422], [327, 429], [365, 430], [281, 446], [328, 452],
        [347, 458]],
    '#00eaf0': [[432, 423], [433, 426], [423, 433], [375, 437], [313, 442], [385, 447], [389, 444], [337, 454]],
    '#00f0a0': [[473, 411], [443, 426], [457, 428], [433, 433], [420, 440], [381, 443], [326, 448], [361, 449]],
    '#00f05a': [[356, 445], [368, 452], [372, 457], [339, 459], [357, 474], [320, 476], [329, 479]],
    '#10f010': [[301, 451], [408, 450], [388, 455], [331, 469], [335, 466], [352, 468], [349, 475], [314, 479],
        [297, 484], [322, 484], [521, 435]],
    '#70ff00': [[370, 446], [355, 471], [356, 468], [302, 475], [301, 484], [310, 487], [351, 487], [316, 497],
        [312, 498]],
    '#a0ff00': [[334, 488], [328, 491], [333, 493], [288, 502], [310, 511]],
    '#e0ff00': [[290, 513], [291, 525], [315, 512], [288, 576], [222, 630]],
    '#ffb400': [[264, 497], [307, 478]],
    '#ff8c00': [[470, 390], [469, 391], [474, 405], [334, 421]],
    '#ff5a00': [[376, 411], [365, 420], [374, 421], [338, 431]]
};
for (const fill in samples) {
    samples[fill].forEach(([cx, cy]) => add('circle', { cx, cy, r: 2.5, fill }));
}

add('path', { d: 'M56 599L719 273', stroke: '#000', 'stroke-width': 2 });

// zone captions
[
    ['ゾーン 5 (0%; 00:00h;  0.0km)', 306],
    ['ゾーン 4 (1%; 00:01h;  0.3km)', 369],
    ['ゾーン 3 (48%; 00:47h; 23.7km)', 433],
    ['ゾーン 2 (38%; 00:37h; 20.8km)', 496],
    ['ゾーン 1 (13%; 00:12h;  5.2km)', 718]
].forEach(([label, y]) => add('text', { x: 718, y, class: 'zone' }, label));
add('text', { x: 58, y: 254, class: 'zone-total' }, 'New Zone (100.0%');
add('text', { x: 58, y: 265, class: 'zone-total' }, '01:38h; 50.1km)');
```
